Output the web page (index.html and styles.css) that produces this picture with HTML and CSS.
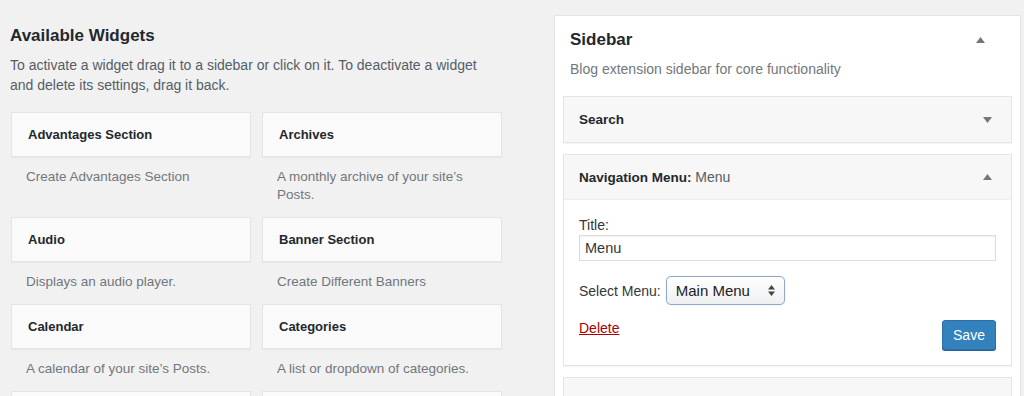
FILE: index.html
```html
<!DOCTYPE html>
<html lang="en">
<head>
  <meta charset="UTF-8">
  <title>Widgets</title>
  <link rel="stylesheet" href="styles.css">
</head>
<body>
  <div class="widgets-page">
    <div class="available-col">
      <h2 class="col-title">Available Widgets</h2>
      <p class="col-desc">To activate a widget drag it to a sidebar or click on it. To deactivate a widget and delete its settings, drag it back.</p>

      <div class="widget-grid">
        <div class="widget-item">
          <div class="widget-top">Advantages Section</div>
          <div class="widget-desc">Create Advantages Section</div>
        </div>
        <div class="widget-item">
          <div class="widget-top">Archives</div>
          <div class="widget-desc">A monthly archive of your site’s Posts.</div>
        </div>
        <div class="widget-item">
          <div class="widget-top">Audio</div>
          <div class="widget-desc">Displays an audio player.</div>
        </div>
        <div class="widget-item">
          <div class="widget-top">Banner Section</div>
          <div class="widget-desc">Create Different Banners</div>
        </div>
        <div class="widget-item">
          <div class="widget-top">Calendar</div>
          <div class="widget-desc">A calendar of your site’s Posts.</div>
        </div>
        <div class="widget-item">
          <div class="widget-top">Categories</div>
          <div class="widget-desc">A list or dropdown of categories.</div>
        </div>
        <div class="widget-item">
          <div class="widget-top">Custom HTML</div>
          <div class="widget-desc">Arbitrary HTML code.</div>
        </div>
        <div class="widget-item">
          <div class="widget-top">Gallery</div>
          <div class="widget-desc">Displays an image gallery.</div>
        </div>
      </div>
    </div>

    <div class="sidebar-col">
      <div class="sidebar-box">
        <div class="sidebar-head">
          <h2 class="sidebar-name">Sidebar</h2>
          <svg class="toggle" width="9" height="6" viewBox="0 0 9 6"><path d="M0 6 L4.5 0 L9 6 Z"/></svg>
        </div>
        <p class="sidebar-desc">Blog extension sidebar for core functionality</p>

        <div class="side-widget">
          <div class="side-widget-top">
            <span class="side-widget-title">Search</span>
            <svg class="toggle" width="9" height="6" viewBox="0 0 9 6"><path d="M0 0 L9 0 L4.5 6 Z"/></svg>
          </div>
        </div>

        <div class="side-widget open">
          <div class="side-widget-top">
            <span class="side-widget-title">Navigation Menu: <span class="in-title">Menu</span></span>
            <svg class="toggle" width="9" height="6" viewBox="0 0 9 6"><path d="M0 6 L4.5 0 L9 6 Z"/></svg>
          </div>
          <div class="side-widget-body">
            <label class="field-label">Title:</label>
            <input class="text-input" type="text" value="Menu">
            <div class="select-row">
              <span>Select Menu:</span>
              <div class="fake-select">
                <span>Main Menu</span>
                <svg width="7" height="11" viewBox="0 0 7 11"><path d="M0 4.5 L3.5 0 L7 4.5 Z M0 6.5 L7 6.5 L3.5 11 Z"/></svg>
              </div>
            </div>
            <div class="widget-actions">
              <a class="delete-link" href="#">Delete</a>
              <button class="save-btn">Save</button>
            </div>
          </div>
        </div>

        <div class="side-widget">
          <div class="side-widget-top">
            <span class="side-widget-title">Recent Posts</span>
            <svg class="toggle" width="9" height="6" viewBox="0 0 9 6"><path d="M0 0 L9 0 L4.5 6 Z"/></svg>
          </div>
        </div>
      </div>
    </div>
  </div>
</body>
</html>
```

FILE: styles.css
```css
* {
  margin: 0;
  padding: 0;
  box-sizing: border-box;
}

body {
  font-family: "Liberation Sans", Arial, sans-serif;
  font-size: 14px;
  color: #23282d;
  background: #f1f1f1;
  overflow: hidden;
}

.widgets-page {
  display: flex;
  align-items: flex-start;
  gap: 52px;
  padding-left: 10px;
}

/* left column */

.available-col {
  width: 492px;
  padding-top: 24px;
}

.col-title {
  font-size: 17px;
  font-weight: 700;
  line-height: 24px;
  color: #23282d;
}

.col-desc {
  max-width: 486px;
  margin-top: 7px;
  line-height: 20px;
  color: #555d66;
}

.widget-grid {
  display: grid;
  grid-template-columns: 240px 240px;
  column-gap: 11px;
  align-items: start;
  margin: 17px 0 0 1px;
}

.widget-top {
  height: 45px;
  display: flex;
  align-items: center;
  padding-left: 16px;
  background: #fafafa;
  border: 1px solid #e5e5e5;
  box-shadow: 0 1px 1px rgba(0, 0, 0, 0.04);
  font-size: 13px;
  font-weight: 700;
  color: #23282d;
}

.widget-desc {
  padding: 11px 24px 13px 15px;
  font-size: 13.5px;
  line-height: 18px;
  color: #72777c;
}

/* right column */

.sidebar-col {
  width: 467px;
  padding-top: 15px;
}

.sidebar-box {
  background: #fff;
  border: 1px solid #e5e5e5;
  box-shadow: 0 1px 1px rgba(0, 0, 0, 0.04);
  padding: 12px 8px 20px 8px;
}

.sidebar-head {
  display: flex;
  align-items: center;
  justify-content: space-between;
  padding: 0 27px 0 7px;
}

.sidebar-name {
  font-size: 17px;
  font-weight: 700;
  line-height: 24px;
}

.toggle {
  fill: #72777c;
}

.sidebar-desc {
  margin-top: 8px;
  padding-left: 7px;
  line-height: 18px;
  color: #72777c;
}

.side-widget {
  margin-top: 11px;
  background: #fff;
  border: 1px solid #e5e5e5;
  box-shadow: 0 1px 1px rgba(0, 0, 0, 0.04);
}

.sidebar-desc + .side-widget {
  margin-top: 18px;
}

.side-widget-top {
  height: 45px;
  display: flex;
  align-items: center;
  justify-content: space-between;
  padding: 0 19px 0 15px;
  background: #f7f7f7;
}

.side-widget.open .side-widget-top {
  border-bottom: 1px solid #eee;
}

.side-widget-title {
  font-size: 13.5px;
  font-weight: 700;
}

.in-title {
  font-size: 14px;
  font-weight: 400;
  color: #555d66;
}

.side-widget-body {
  padding: 16px 15px 15px 15px;
}

.field-label {
  display: block;
  line-height: 18px;
  color: #32373c;
}

.text-input {
  display: block;
  width: 100%;
  height: 26px;
  margin-top: 1px;
  padding: 0 5px;
  border: 1px solid #ddd;
  box-shadow: inset 0 1px 2px rgba(0, 0, 0, 0.07);
  font-family: inherit;
  font-size: 14.5px;
  color: #32373c;
  background: #fff;
}

.select-row {
  display: flex;
  align-items: center;
  gap: 5px;
  margin-top: 15px;
  color: #32373c;
}

.fake-select {
  width: 119px;
  height: 29px;
  display: flex;
  align-items: center;
  justify-content: space-between;
  padding: 0 9px 0 9px;
  border: 1px solid #8fa9c7;
  border-radius: 5px;
  background: linear-gradient(#ffffff, #eef0f2);
  box-shadow: 0 0 1px rgba(80, 130, 200, 0.5);
  font-size: 15px;
  color: #222;
}

.fake-select svg {
  fill: #444;
}

.widget-actions {
  display: flex;
  align-items: center;
  justify-content: space-between;
  margin-top: 15px;
}

.delete-link {
  color: #a00;
  text-decoration: underline;
  align-self: flex-start;
  line-height: 18px;
  margin-top: -1px;
}

.save-btn {
  width: 54px;
  height: 30px;
  border: 1px solid #2a72a6;
  border-radius: 3px;
  background: #3382bd;
  box-shadow: 0 1px 0 #256696;
  color: #fff;
  font-family: inherit;
  font-size: 14px;
}
```
